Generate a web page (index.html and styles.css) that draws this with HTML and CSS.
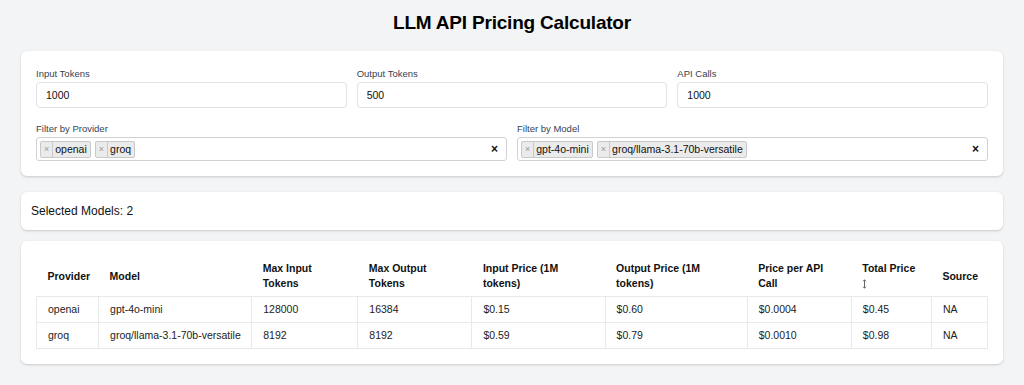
FILE: index.html
```html
<!DOCTYPE html>
<html lang="en">
<head>
<meta charset="utf-8">
<title>LLM API Pricing Calculator</title>
<link rel="stylesheet" href="styles.css">
</head>
<body>
<div class="page">
  <h1 class="title">LLM API Pricing Calculator</h1>

  <section class="card form-card">
    <div class="row row-3">
      <div class="field">
        <label class="label">Input Tokens</label>
        <input class="input" type="text" value="1000">
      </div>
      <div class="field">
        <label class="label">Output Tokens</label>
        <input class="input" type="text" value="500">
      </div>
      <div class="field">
        <label class="label">API Calls</label>
        <input class="input" type="text" value="1000">
      </div>
    </div>
    <div class="row row-2">
      <div class="field">
        <label class="label">Filter by Provider</label>
        <div class="multi">
          <div class="tags">
            <span class="tag"><span class="tag-x">×</span><span class="tag-text">openai</span></span>
            <span class="tag"><span class="tag-x">×</span><span class="tag-text">groq</span></span>
          </div>
          <span class="clear">×</span>
        </div>
      </div>
      <div class="field">
        <label class="label">Filter by Model</label>
        <div class="multi">
          <div class="tags">
            <span class="tag"><span class="tag-x">×</span><span class="tag-text">gpt-4o-mini</span></span>
            <span class="tag"><span class="tag-x">×</span><span class="tag-text">groq/llama-3.1-70b-versatile</span></span>
          </div>
          <span class="clear">×</span>
        </div>
      </div>
    </div>
  </section>

  <section class="card count-card">Selected Models: 2</section>

  <section class="card table-card">
    <table class="table">
      <colgroup>
        <col style="width:62px"><col style="width:153px"><col style="width:106px"><col style="width:114px"><col style="width:133px"><col style="width:142px"><col style="width:104px"><col style="width:80px"><col style="width:56px">
      </colgroup>
      <thead>
        <tr>
          <th>Provider</th>
          <th>Model</th>
          <th>Max Input<br>Tokens</th>
          <th>Max Output<br>Tokens</th>
          <th>Input Price (1M<br>tokens)</th>
          <th>Output Price (1M<br>tokens)</th>
          <th>Price per API<br>Call</th>
          <th>Total Price<br><svg class="sort" width="5" height="10" viewBox="0 0 5 10" aria-hidden="true"><path d="M2.5 0.8V9.2M1 2.3L2.5 0.8L4 2.3M1 7.7L2.5 9.2L4 7.7" fill="none" stroke="#666" stroke-width="1"/></svg></th>
          <th>Source</th>
        </tr>
      </thead>
      <tbody>
        <tr>
          <td>openai</td><td>gpt-4o-mini</td><td>128000</td><td>16384</td><td>$0.15</td><td>$0.60</td><td>$0.0004</td><td>$0.45</td><td>NA</td>
        </tr>
        <tr>
          <td>groq</td><td>groq/llama-3.1-70b-versatile</td><td>8192</td><td>8192</td><td>$0.59</td><td>$0.79</td><td>$0.0010</td><td>$0.98</td><td>NA</td>
        </tr>
      </tbody>
    </table>
  </section>
</div>
</body>
</html>
```

FILE: styles.css
```css
* { box-sizing: border-box; }
html, body { margin: 0; padding: 0; }
body {
  background: #f3f4f6;
  font-family: "Liberation Sans", Arial, sans-serif;
  color: #111827;
}
.page {
  padding: 0 21px 20px;
}
.title {
  margin: 0;
  padding: 12px 0 17px;
  text-align: center;
  font-size: 19px;
  letter-spacing: -0.2px;
  line-height: 22px;
  font-weight: 700;
  color: #000;
}
.card {
  background: #fff;
  border-radius: 6px;
  box-shadow: 0 1px 3px rgba(0,0,0,0.12), 0 1px 2px rgba(0,0,0,0.06);
}
.form-card {
  padding: 16px 15px 15px;
  display: flex;
  flex-direction: column;
  gap: 14px;
}
.row { display: grid; gap: 10px; }
.row-3 { grid-template-columns: 1fr 1fr 1fr; }
.row-2 { grid-template-columns: 1fr 1fr; }
.field { display: flex; flex-direction: column; }
.label {
  font-size: 9.5px;
  line-height: 14px;
  color: #374151;
  margin-bottom: 1px;
}
.input {
  height: 26px;
  border: 1px solid #e0e2e6;
  border-radius: 4px;
  padding: 0 9px;
  font-family: inherit;
  font-size: 10.5px;
  color: #111;
  background: #fff;
  outline: none;
}
.multi {
  height: 24px;
  border: 1px solid #cfd2d6;
  border-radius: 3px;
  display: flex;
  align-items: center;
  justify-content: space-between;
  padding: 0 8px 0 3px;
}
.tags { display: flex; gap: 4px; }
.tag {
  display: inline-flex;
  align-items: stretch;
  height: 17px;
  background: #ebebeb;
  border: 1px solid #c9c9c9;
  border-radius: 2px;
  font-size: 10.5px;
  line-height: 15px;
  color: #111;
}
.tag-x {
  color: #999;
  font-size: 9px;
  padding: 0 3px 0 3px;
  border-right: 1px solid #c9c9c9;
}
.tag-text { padding: 0 3px 0 2px; }
.clear {
  font-size: 12px;
  font-weight: 700;
  color: #111;
}
.count-card {
  margin-top: 16px;
  height: 38px;
  padding: 0 10px;
  display: flex;
  align-items: center;
  font-size: 12px;
  color: #111;
}
.table-card {
  margin-top: 11px;
  padding: 15px 15px 15px;
}
.table {
  width: 100%;
  border-collapse: collapse;
  table-layout: fixed;
  font-size: 10.5px;
}
.table th {
  text-align: left;
  font-weight: 700;
  font-size: 10.5px;
  line-height: 15px;
  padding: 5px 11px;
  vertical-align: middle;
  color: #111;
}
.table td {
  border: 1px solid #e8e9ec;
  padding: 5px 11px;
  line-height: 15px;
  color: #222;
  white-space: nowrap;
}
.sort {
  display: inline-block;
  vertical-align: middle;
}
```
